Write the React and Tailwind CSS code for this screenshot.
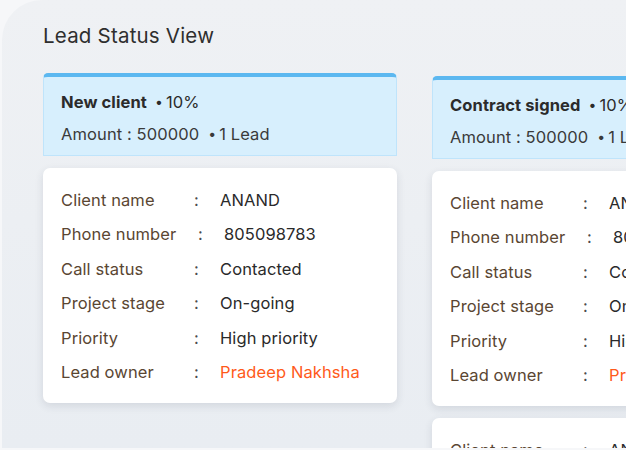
import React from "react";

const rows = [
  ["Client name", "ANAND"],
  ["Phone number", "805098783"],
  ["Call status", "Contacted"],
  ["Project stage", "On-going"],
  ["Priority", "High priority"],
  ["Lead owner", "Pradeep Nakhsha"],
];

function Header({ title }) {
  return (
    <div className="rounded-t-[5px] border-t-[4px] border-x border-b border-t-[#5cb8f0] border-x-[#bfe4fb] border-b-[#bfe4fb] bg-[#d7effd] pl-[17px] pt-[14px] pb-[10px] whitespace-nowrap">
      <div className="flex items-center text-[16.5px] leading-[22px] text-[#2b2b2b] tracking-[0.1px]">
        <span className="font-bold">{title}</span>
        <span className="ml-[8px] mr-[3px] text-[14px]">•</span>
        <span>10%</span>
      </div>
      <div className="mt-[10px] flex items-center text-[16.5px] leading-[22px] text-[#3a3a3a] tracking-[0.1px]">
        <span>Amount : 500000</span>
        <span className="ml-[9px] mr-[3px] text-[14px]">•</span>
        <span>1 Lead</span>
      </div>
    </div>
  );
}

function Card() {
  return (
    <div className="rounded-[7px] bg-white pl-[18px] pt-[21px] pb-[20px] shadow-[0_3px_8px_rgba(40,50,70,0.12)] whitespace-nowrap">
      <div className="flex flex-col gap-[12.4px]">
        {rows.map(([k, v]) => (
          <div key={k} className="flex items-center text-[16.5px] leading-[22px] tracking-[0.1px]">
            <span className={k === "Phone number" ? "w-[137px] text-[#5a4632]" : "w-[133px] text-[#5a4632]"}>{k}</span>
            <span className="w-[26px] text-[#4a4a4a]">:</span>
            <span className={k === "Lead owner" ? "text-[#ff5a1a]" : "text-[#2a2a2a]"}>{v}</span>
          </div>
        ))}
      </div>
    </div>
  );
}

export default function App() {
  return (
    <div className="w-[626px] h-[450px] overflow-hidden bg-[#f6f7f9]" style={{ fontFamily: "Inter, 'Noto Sans', sans-serif" }}>
      <div className="ml-[2px] h-[448px] rounded-tl-[40px] bg-gradient-to-b from-[#eff1f4] to-[#e9edf2] pl-[41px] pt-[22px] overflow-hidden">
        <h1 className="text-[20.5px] leading-[28px] text-[#2e2e2e] font-normal tracking-[0.2px]">Lead Status View</h1>
        <div className="mt-[23px] flex gap-[35px]">
          <div className="w-[354px] shrink-0 flex flex-col gap-[12px]">
            <Header title="New client" />
            <Card />
          </div>
          <div className="w-[354px] shrink-0 mt-[3px] flex flex-col gap-[12px]">
            <Header title="Contract signed" />
            <Card />
            <Card />
          </div>
        </div>
      </div>
    </div>
  );
}
